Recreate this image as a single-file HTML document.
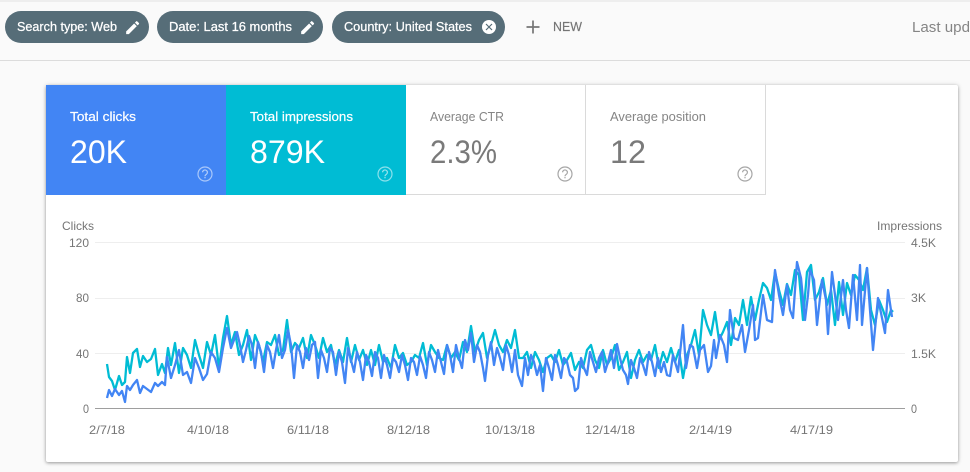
<!DOCTYPE html>
<html><head><meta charset="utf-8"><style>
html,body{margin:0;padding:0;width:970px;height:472px;overflow:hidden;background:#fafafa}
#top{position:absolute;left:0;top:0;width:970px;height:2px;background:#eeeeee}
#hd{position:absolute;left:0;top:60px;width:970px;height:1px;background:#dcdcdc}
#card{position:absolute;left:46px;top:85px;width:912px;height:377px;background:#fff;border-radius:2px;box-shadow:0 1px 3px rgba(0,0,0,.35),0 0 6px rgba(0,0,0,.1)}
svg{position:absolute;left:0;top:0}
text{font-family:"Liberation Sans",sans-serif}
</style></head><body>
<div id="top"></div><div id="hd"></div><div id="card"></div>
<svg width="970" height="472" viewBox="0 0 970 472">
<g fill="#566d78">
<rect x="5" y="11" width="144" height="32" rx="16"/>
<rect x="157" y="11" width="166" height="32" rx="16"/>
<rect x="332" y="11" width="173" height="32" rx="16"/>
</g>
<g fill="#fff" font-size="13">
<g stroke="#fff" stroke-width=".25">
<text x="17" y="31" textLength="100" lengthAdjust="spacingAndGlyphs">Search type: Web</text>
<text x="169" y="31" textLength="123" lengthAdjust="spacingAndGlyphs">Date: Last 16 months</text>
<text x="344" y="31" textLength="128" lengthAdjust="spacingAndGlyphs">Country: United States</text>
</g>
<path transform="translate(124,19) scale(.72)" d="M3 17.25V21h3.75L17.81 9.94l-3.75-3.75L3 17.25zM20.71 7.04c.39-.39.39-1.02 0-1.41l-2.34-2.34c-.39-.39-1.02-.39-1.41 0l-1.83 1.83 3.75 3.75 1.83-1.83z"/>
<path transform="translate(299,19) scale(.72)" d="M3 17.25V21h3.75L17.81 9.94l-3.75-3.75L3 17.25zM20.71 7.04c.39-.39.39-1.02 0-1.41l-2.34-2.34c-.39-.39-1.02-.39-1.41 0l-1.83 1.83 3.75 3.75 1.83-1.83z"/>
<circle cx="489" cy="27" r="7"/>
</g>
<path d="M486 24l6 6M492 24l-6 6" stroke="#566d78" stroke-width="1.2" fill="none"/>
<path d="M533 20.500v13M526.500 27h13" stroke="#757575" stroke-width="1.7" fill="none"/>
<text x="553" y="31" font-size="13" fill="#757575" stroke="#757575" stroke-width=".15" textLength="29" lengthAdjust="spacingAndGlyphs">NEW</text>
<text x="912" y="32" font-size="14.500" fill="#858585" textLength="58" lengthAdjust="spacingAndGlyphs">Last upd</text>

<rect x="46" y="85" width="180" height="110" fill="#4285f4"/>
<rect x="226" y="85" width="180" height="110" fill="#00bcd4"/>
<path d="M406 194.500H765.500V85M585.500 85V195" fill="none" stroke="#dadada" stroke-width="1"/>

<g font-size="13">
<g stroke="#fff" stroke-width=".2">
<text x="70" y="121" fill="#fff" textLength="66" lengthAdjust="spacingAndGlyphs">Total clicks</text>
<text x="250" y="121" fill="#fff" textLength="103" lengthAdjust="spacingAndGlyphs">Total impressions</text>
</g>
<text x="430" y="121" fill="#858585" textLength="74" lengthAdjust="spacingAndGlyphs">Average CTR</text>
<text x="610" y="121" fill="#858585" textLength="96" lengthAdjust="spacingAndGlyphs">Average position</text>
</g>
<g font-size="32">
<text x="70" y="163" fill="#fff" textLength="57" lengthAdjust="spacingAndGlyphs">20K</text>
<text x="250" y="163" fill="#fff" textLength="75" lengthAdjust="spacingAndGlyphs">879K</text>
<text x="430" y="163" fill="#7a7a7a" textLength="67" lengthAdjust="spacingAndGlyphs">2.3%</text>
<text x="610" y="163" fill="#7a7a7a" textLength="36" lengthAdjust="spacingAndGlyphs">12</text>
</g>
<g fill="none" stroke-width="1.200">
<g stroke="#fff" opacity=".55"><circle cx="205" cy="174" r="7"/><circle cx="385" cy="174" r="7"/></g>
<g stroke="#a6a6a6"><circle cx="565" cy="174" r="7"/><circle cx="745" cy="174" r="7"/></g>
<g stroke="#fff" opacity=".6"><path d="M202.600 172.300a2.400 2.400 0 1 1 3.800 2c-.9.6-1.400 1-1.400 2"/><path d="M382.600 172.300a2.400 2.400 0 1 1 3.800 2c-.9.6-1.400 1-1.400 2"/></g>
<g stroke="#a6a6a6"><path d="M562.600 172.300a2.400 2.400 0 1 1 3.800 2c-.9.6-1.400 1-1.400 2"/><path d="M742.600 172.300a2.400 2.400 0 1 1 3.800 2c-.9.6-1.400 1-1.400 2"/></g>
</g>
<g fill="#fff" opacity=".6"><rect x="204.400" y="177" width="1.200" height="1.300"/><rect x="384.400" y="177" width="1.200" height="1.300"/></g>
<g fill="#a6a6a6"><rect x="564.400" y="177" width="1.200" height="1.300"/><rect x="744.400" y="177" width="1.200" height="1.300"/></g>

<path d="M95 242.500H905M95 298.500H905M95 353.500H905" stroke="#eeeeee" stroke-width="1"/>
<path d="M95 408.500H905" stroke="#9e9e9e" stroke-width="1"/>
<g font-size="12" fill="#757575">
<text x="62" y="230" textLength="32" lengthAdjust="spacingAndGlyphs">Clicks</text>
<text x="877" y="230" textLength="65" lengthAdjust="spacingAndGlyphs">Impressions</text>
<text x="69" y="247" textLength="20" lengthAdjust="spacingAndGlyphs">120</text>
<text x="76" y="302" textLength="13" lengthAdjust="spacingAndGlyphs">80</text>
<text x="76" y="358" textLength="13" lengthAdjust="spacingAndGlyphs">40</text>
<text x="83" y="413" textLength="6" lengthAdjust="spacingAndGlyphs">0</text>
<text x="911" y="247" textLength="25" lengthAdjust="spacingAndGlyphs">4.5K</text>
<text x="911" y="302" textLength="15" lengthAdjust="spacingAndGlyphs">3K</text>
<text x="911" y="358" textLength="25" lengthAdjust="spacingAndGlyphs">1.5K</text>
<text x="911" y="413" textLength="6" lengthAdjust="spacingAndGlyphs">0</text>
<text x="89" y="434" textLength="36" lengthAdjust="spacingAndGlyphs">2/7/18</text>
<text x="187" y="434" textLength="42" lengthAdjust="spacingAndGlyphs">4/10/18</text>
<text x="287" y="434" textLength="42" lengthAdjust="spacingAndGlyphs">6/11/18</text>
<text x="387" y="434" textLength="43" lengthAdjust="spacingAndGlyphs">8/12/18</text>
<text x="485" y="434" textLength="50" lengthAdjust="spacingAndGlyphs">10/13/18</text>
<text x="585" y="434" textLength="50" lengthAdjust="spacingAndGlyphs">12/14/18</text>
<text x="689" y="434" textLength="43" lengthAdjust="spacingAndGlyphs">2/14/19</text>
<text x="790" y="434" textLength="43" lengthAdjust="spacingAndGlyphs">4/17/19</text>
</g>

<polyline fill="none" stroke="#00bcd4" stroke-width="2.300" stroke-linejoin="round" points="107,364 109,377 112,381 115,390 119,376 122,385 125,382 127,357 130,373 133,353 137,349 140,367 143,356 147,362 151,359 155,349 158,375 162,364 165,373 168,348 171,365 175,343 179,373 183,348 187,355 191,368 195,340 199,355 203,368 207,342 211,355 215,335 219,368 223,338 227,316 231,345 235,332 239,355 243,345 247,330 251,360 255,335 259,345 263,362 267,342 271,345 275,335 279,355 283,350 287,320 291,352 295,343 299,348 303,338 307,358 311,335 315,345 319,358 323,338 327,352 331,345 335,365 339,350 343,362 347,338 351,362 355,345 359,360 363,350 367,365 371,350 375,365 379,345 383,362 387,358 391,368 395,345 399,358 403,353 407,365 411,362 415,355 419,358 423,343 427,365 431,345 435,352 439,358 443,360 447,345 451,358 455,352 459,360 463,342 467,352 471,326 475,352 479,340 483,333 487,358 491,345 495,330 499,345 503,352 507,340 511,348 515,330 519,358 523,358 527,352 531,368 535,352 539,360 543,372 547,358 551,355 555,362 559,350 563,365 567,360 571,353 575,370 579,362 583,368 587,350 591,345 595,360 599,368 603,350 607,365 611,358 615,345 619,370 623,362 627,352 631,378 635,360 639,350 643,362 647,355 651,360 655,345 659,368 663,352 667,362 671,348 675,362 679,350 683,378 687,355 691,345 695,330 699,355 703,310 707,325 711,335 715,312 719,340 723,332 727,322 731,345 735,318 739,325 743,300 747,325 751,297 755,320 759,300 763,283 767,288 771,300 775,272 779,290 783,305 787,284 791,295 795,270 799,275 803,320 807,272 811,265 815,300 819,292 823,278 827,305 831,290 835,325 839,282 843,315 847,283 851,295 855,275 859,280 863,290 867,268 871,310 875,325 879,300 883,310 887,322 891,310 893,312"/>
<polyline fill="none" stroke="#4285f4" stroke-width="2.300" stroke-linejoin="round" points="107,398 109,390 112,396 115,389 119,395 122,391 125,402 127,386 130,390 133,385 137,380 140,393 143,386 147,389 151,392 155,383 158,386 162,382 165,385 167,357 171,378 175,365 179,350 183,375 187,372 191,383 195,358 199,368 203,380 207,374 211,352 215,358 219,372 223,348 227,328 231,348 234,340 237,332 240,345 243,362 246,350 249,336 252,345 255,368 258,342 261,352 264,372 267,345 270,352 273,368 276,350 279,335 282,358 285,350 288,330 291,345 294,378 297,345 300,352 303,368 306,348 309,360 312,345 315,342 318,378 321,350 324,358 327,372 330,348 333,352 336,375 339,352 342,362 345,383 348,348 351,360 354,372 357,352 360,362 363,380 366,355 369,362 372,376 375,352 378,358 381,378 384,355 387,365 390,378 393,358 396,362 399,372 402,355 405,365 408,380 411,358 414,362 417,375 420,356 423,365 426,378 429,352 432,360 435,372 438,350 441,362 444,374 447,345 450,355 453,372 456,345 459,358 462,368 465,340 468,350 471,333 474,362 477,345 480,352 483,368 485,381 488,355 491,342 494,365 497,348 500,358 503,370 506,345 509,355 512,372 515,350 518,375 522,386 525,358 528,375 531,355 534,362 537,375 540,365 543,391 546,358 549,368 552,380 555,355 558,365 561,378 564,358 567,362 570,375 573,378 575,391 578,388 581,358 584,368 587,375 590,352 593,362 596,372 599,358 602,352 605,372 608,362 611,350 614,368 617,344 620,358 623,370 626,375 628,384 631,360 634,368 637,378 640,358 643,365 646,375 649,352 652,362 655,376 658,358 661,372 664,362 667,375 670,376 673,355 678,372 683,325 686,368 690,345 693,347 697,368 700,350 704,345 708,372 711,366 714,340 716,358 720,335 724,345 727,362 730,310 734,338 738,340 742,325 745,352 749,330 753,305 755,340 758,338 763,295 767,320 772,322 775,270 779,295 783,315 787,285 790,310 793,318 797,262 801,278 805,320 808,295 810,270 814,280 817,325 822,280 826,300 828,334 832,272 835,295 838,320 843,280 846,310 849,328 853,275 857,320 860,265 862,325 867,268 870,310 873,350 878,298 882,318 885,333 888,290 892,317"/>
</svg>
</body></html>
